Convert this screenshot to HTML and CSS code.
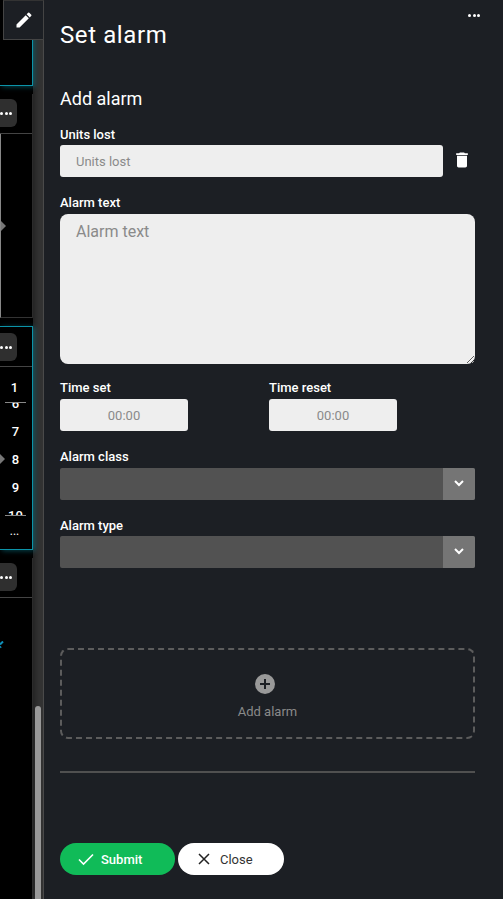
FILE: index.html
```html
<!DOCTYPE html>
<html lang="en">
<head>
  <meta charset="UTF-8">
  <meta name="viewport" content="width=device-width, initial-scale=1.0">
  <title>Set alarm</title>
  <link rel="stylesheet" href="styles.css">
</head>
<body>
  <div class="rail">
    <div class="cards">
      <div class="card card-first active"></div>

      <div class="card card-chart">
        <div class="card-head"><span class="more-btn"><span class="dots"><i></i><i></i><i></i></span></span></div>
        <div class="chart-box"><span class="marker"></span></div>
      </div>

      <div class="card card-list active">
        <div class="card-head"><span class="more-btn"><span class="dots"><i></i><i></i><i></i></span></span></div>
        <div class="first-num">1</div>
        <div class="picker">
          <div class="picker-rows">
            <div>6</div><div>7</div><div>8</div><div>9</div><div>10</div>
          </div>
        </div>
        <span class="marker marker-list"></span>
        <div class="list-more">...</div>
      </div>

      <div class="card card-last">
        <div class="card-head"><span class="more-btn"><span class="dots"><i></i><i></i><i></i></span></span></div>
        <svg class="blue-mark" width="5" height="8" viewBox="0 0 5 8"><path d="M0 3.500L3 .5M0 6.500l1-1" fill="none" stroke="#0e8fb8" stroke-width="2"/></svg>
      </div>
    </div>
    <div class="scrolltrack"><div class="scrollthumb"></div></div>
  </div>

  <button class="edit-btn" type="button" aria-label="Edit">
    <svg width="20" height="20" viewBox="0 0 24 24"><path fill="#fff" d="M3 17.25V21h3.75L17.81 9.94l-3.75-3.75L3 17.25zM20.71 7.04a1 1 0 0 0 0-1.41l-2.34-2.34a1 1 0 0 0-1.41 0l-1.83 1.83 3.75 3.75 1.83-1.83z"/></svg>
  </button>

  <main class="panel">
    <span class="panel-dots"><i></i><i></i><i></i></span>
    <h1>Set alarm</h1>
    <h2>Add alarm</h2>

    <label class="field-label" for="units">Units lost</label>
    <div class="units-row">
      <input class="input units-input" id="units" type="text" placeholder="Units lost">
      <svg class="trash" width="20" height="20" viewBox="0 0 24 24"><path fill="#fff" d="M6 19c0 1.1.9 2 2 2h8c1.100 0 2-.9 2-2V7H6v12zM19 4h-3.500l-1-1h-5l-1 1H5v2h14V4z"/></svg>
    </div>

    <label class="field-label label-text" for="alarmText">Alarm text</label>
    <textarea class="input alarm-text" id="alarmText" placeholder="Alarm text"></textarea>

    <div class="times">
      <div class="time-col">
        <label class="field-label" for="timeSet">Time set</label>
        <input class="input time-input" id="timeSet" type="text" placeholder="00:00">
      </div>
      <div class="time-col">
        <label class="field-label" for="timeReset">Time reset</label>
        <input class="input time-input" id="timeReset" type="text" placeholder="00:00">
      </div>
    </div>

    <div class="field-label label-class">Alarm class</div>
    <div class="select">
      <span class="select-arrow"><svg width="12" height="12" viewBox="0 0 12 12"><path d="M2 3l4 4 4-4" fill="none" stroke="#fff" stroke-width="2"/></svg></span>
    </div>

    <div class="field-label label-type">Alarm type</div>
    <div class="select select-type">
      <span class="select-arrow"><svg width="12" height="12" viewBox="0 0 12 12"><path d="M2 3l4 4 4-4" fill="none" stroke="#fff" stroke-width="2"/></svg></span>
    </div>

    <div class="add-box">
      <svg class="add-icon" width="20" height="20" viewBox="0 0 20 20"><circle cx="10" cy="10" r="10" fill="#999"/><path d="M10 5v10M5 10h10" stroke="#1c1f24" stroke-width="2"/></svg>
      <span>Add alarm</span>
    </div>

    <hr class="divider">

    <div class="actions">
      <button class="btn btn-submit" type="button">
        <svg width="16" height="16" viewBox="0 0 16 16"><path d="M1 8.500l4.500 4.500L15 3.500" fill="none" stroke="#fff" stroke-width="1.600"/></svg>
        Submit
      </button>
      <button class="btn btn-close" type="button">
        <svg width="12" height="12" viewBox="0 0 12 12"><path d="M1 1l10 10M11 1L1 11" fill="none" stroke="#222" stroke-width="1.500"/></svg>
        Close
      </button>
    </div>
  </main>
</body>
</html>
```

FILE: styles.css
```css
* {
  box-sizing: border-box;
}
html, body {
  margin: 0;
  height: 899px;
  overflow: hidden;
}
body {
  display: flex;
  position: relative;
  background: #1c1f24;
  color: #fff;
  font-family: Roboto, Arial, sans-serif;
}

/* left side, what is left visible of the page behind the panel */
.rail {
  flex: none;
  display: flex;
  width: 44px;
  height: 899px;
  background: #333;
  border-right: 1px solid #4a4a4a;
}
.cards {
  flex: none;
  width: 33px;
  display: flex;
  flex-direction: column;
  gap: 8px;
  background: #000;
  box-shadow: 2px 0 6px rgba(0, 0, 0, .4);
}
.card {
  position: relative;
  background: #000;
  border-right: 1px solid #2b2b2b;
}
.card.active {
  border-right: 1px solid #0c93a8;
  border-bottom: 1px solid #0c93a8;
  box-shadow: 2px 1px 5px rgba(12, 147, 168, .45);
}
.card-first {
  height: 86px;
}
.card-chart {
  height: 224px;
}
.card-list {
  height: 224px;
  border-top: 1px solid #0c93a8;
}
.card-last {
  flex: 1;
}
.card-head {
  height: 40px;
  padding-top: 5px;
  border-bottom: 1px solid #444;
}
.card-list .card-head {
  padding-top: 6px;
}
.more-btn {
  display: flex;
  align-items: center;
  justify-content: flex-end;
  width: 17px;
  height: 28px;
  padding-right: 5px;
  background: #2f2f2f;
  border-radius: 0 6px 6px 0;
}
.dots, .panel-dots {
  display: flex;
  gap: 1.500px;
}
.dots i, .panel-dots i {
  display: block;
  width: 3px;
  height: 3px;
  border-radius: 50%;
  background: #fff;
}
.chart-box {
  position: relative;
  height: 184px;
  border-left: 1px solid #888;
  border-bottom: 1px solid #333;
}
.marker {
  position: absolute;
  left: 0;
  top: 87px;
  border-left: 5px solid #777;
  border-top: 5px solid transparent;
  border-bottom: 5px solid transparent;
}
.marker-list {
  top: 127px;
}
.first-num {
  height: 35px;
  padding-top: 13px;
  padding-right: 3px;
  font-size: 13px;
  font-weight: 500;
  line-height: 15px;
  text-align: center;
}
.picker {
  width: 21px;
  height: 114px;
  margin-left: 5px;
  overflow: hidden;
  border-top: 1px solid #888;
  border-bottom: 1px solid #888;
}
.picker-rows {
  margin-top: -13px;
  font-size: 13px;
  font-weight: 500;
  text-align: center;
}
.picker-rows div {
  height: 28px;
  line-height: 28px;
}
.list-more {
  margin-top: 8px;
  padding-right: 3px;
  font-size: 12px;
  line-height: 14px;
  text-align: center;
}
.blue-mark {
  position: absolute;
  left: 0;
  top: 83px;
}
.scrolltrack {
  flex: 1;
  position: relative;
}
.scrollthumb {
  position: absolute;
  left: 2px;
  right: 2px;
  top: 706px;
  bottom: -6px;
  background: #999;
  border-radius: 3px;
}
.edit-btn {
  position: absolute;
  left: 3px;
  top: 0;
  display: flex;
  align-items: center;
  justify-content: center;
  width: 41px;
  height: 40px;
  padding: 0;
  background: #1c1f24;
  border: 1px solid #444;
  border-top-color: #333;
}

/* panel */
.panel {
  position: relative;
  flex: 1;
  padding: 0 0 0 16px;
}
.panel-dots {
  position: absolute;
  top: 14px;
  right: 23px;
}
h1 {
  margin: 0;
  padding-top: 20px;
  font-size: 24px;
  font-weight: 400;
  line-height: 30px;
  letter-spacing: .6px;
}
h2 {
  margin: 37px 0 0;
  font-size: 18px;
  font-weight: 400;
  line-height: 24px;
}
.field-label {
  display: block;
  font-size: 13px;
  font-weight: 500;
  line-height: 16px;
}
.panel > .field-label:first-of-type {
  margin-top: 16px;
}
.input {
  display: block;
  background: #eee;
  border: 0;
  border-radius: 3px;
  color: #333;
  font-family: Roboto, Arial, sans-serif;
  font-size: 13px;
}
.input::placeholder {
  color: #8a8a8a;
  opacity: 1;
}
.units-row {
  display: flex;
  align-items: center;
  gap: 9px;
  width: 425px;
  margin-top: 2px;
}
.units-input {
  width: 383px;
  height: 32px;
  padding: 0 16px;
}
.trash {
  flex: none;
  margin-bottom: 2px;
}
.label-text {
  margin-top: 18px;
}
.alarm-text {
  width: 415px;
  height: 150px;
  margin-top: 3px;
  padding: 8px 16px;
  border-radius: 8px;
  font-size: 16px;
  line-height: 19px;
}
.times {
  display: flex;
  gap: 81px;
  margin-top: 16px;
}
.time-col {
  width: 128px;
}
.time-input {
  width: 128px;
  height: 32px;
  margin-top: 3px;
  text-align: center;
}
.label-class {
  margin-top: 18px;
}
.label-type {
  margin-top: 18px;
}
.select {
  display: flex;
  justify-content: flex-end;
  width: 415px;
  height: 32px;
  margin-top: 3px;
  background: #525252;
  border-radius: 2px;
}
.select-type {
  margin-top: 2px;
}
.select-arrow {
  display: flex;
  align-items: center;
  justify-content: center;
  width: 32px;
  background: #757575;
  border-radius: 0 2px 2px 0;
}
.add-box {
  display: flex;
  flex-direction: column;
  align-items: center;
  gap: 10px;
  width: 415px;
  height: 91px;
  margin-top: 80px;
  padding-top: 24px;
  border: 2px dashed #5c5c5c;
  border-radius: 8px;
  color: #8a8a8a;
  font-size: 13px;
}
.add-box span {
  line-height: 16px;
}
.add-icon {
  margin-right: 5px;
}
.divider {
  width: 415px;
  height: 2px;
  margin: 32px 0 0;
  background: #505050;
  border: 0;
}
.actions {
  display: flex;
  gap: 3px;
  margin-top: 70px;
}
.btn {
  display: flex;
  align-items: center;
  height: 32px;
  padding-bottom: 1px;
  border: 0;
  border-radius: 16px;
  font-family: Roboto, Arial, sans-serif;
  font-size: 13px;
  font-weight: 500;
}
.btn-submit {
  width: 115px;
  gap: 7px;
  padding-left: 18px;
  background: #10bb58;
  color: #fff;
}
.btn-close {
  width: 106px;
  gap: 10px;
  padding-left: 20px;
  background: #fff;
  color: #333;
  font-weight: 400;
}
```
